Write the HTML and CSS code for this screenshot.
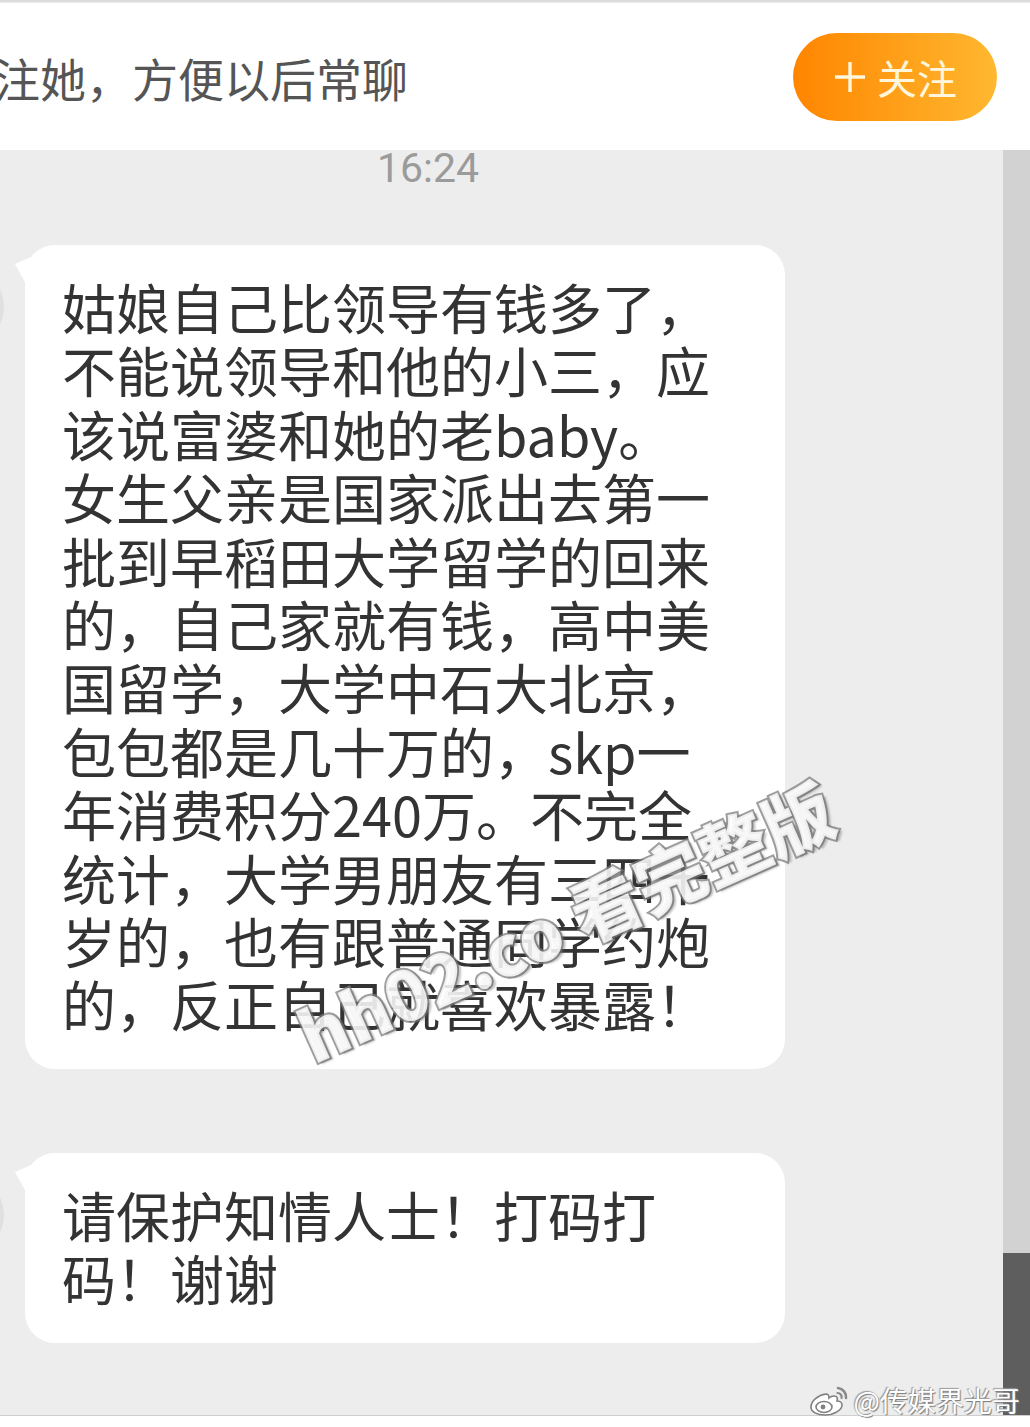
FILE: index.html
```html
<!DOCTYPE html>
<html>
<head>
    <meta charset="utf-8">
    <title>聊天</title>
    <meta name="viewport" content="width=device-width, initial-scale=1.0">
    <link rel="stylesheet" href="styles.css">
</head>
<body>
    <div class="screen">
        <div class="top-edge"></div>
        <div class="header">
            <div class="hint">关注她，方便以后常聊</div>
            <button class="follow-btn">
                <svg class="plus" width="34" height="34" viewBox="0 0 34 34">
                    <path d="M17 2v30M2 17h30" stroke="currentColor" stroke-width="3.4" fill="none"/>
                </svg>
                <span>关注</span>
            </button>
        </div>

        <div class="main">
            <div class="chat">
                <div class="time">16:24</div>

                <div class="msg first">
                    <div class="avatar"></div>
                    <div class="bubble">
                        姑娘自己比领导有钱多了，<br>
                        不能说领导和他的小三，应<br>
                        该说富婆和她的老baby。<br>
                        女生父亲是国家派出去第一<br>
                        批到早稻田大学留学的回来<br>
                        的，自己家就有钱，高中美<br>
                        国留学，大学中石大北京，<br>
                        包包都是几十万的，skp一<br>
                        年消费积分240万。不完全<br>
                        统计，大学男朋友有三四十<br>
                        岁的，也有跟普通同学约炮<br>
                        的，反正自己就喜欢暴露！
                    </div>
                </div>

                <div class="msg second">
                    <div class="avatar"></div>
                    <div class="bubble">
                        请保护知情人士！打码打<br>
                        码！谢谢
                    </div>
                </div>

                <div class="watermark">hh02.co 看完整版</div>
            </div>
            <div class="scrollbar"><div class="thumb"></div></div>
        </div>

        <div class="footer"></div>

        <div class="weibo-mark">
            <svg width="44" height="32" viewBox="0 0 44 32">
                <path d="M18 10c-8 1-15 7-15 13 0 5 6 8 14 8 9 0 17-5 17-10 0-3-3-4-5-4 1-3 0-5-3-5-2 0-4 1-5 2 0-3-1-4-3-4z" fill="#fff" stroke="#808080" stroke-width="1.6"/>
                <ellipse cx="16" cy="23" rx="8" ry="5.5" fill="none" stroke="#808080" stroke-width="1.6"/>
                <circle cx="15" cy="23" r="2.4" fill="#808080"/>
                <path d="M30 4a9 9 0 0 1 8 10" fill="none" stroke="#8a8a8a" stroke-width="2.6" stroke-linecap="round"/>
                <path d="M29.5 9a4 4 0 0 1 4 5" fill="none" stroke="#8a8a8a" stroke-width="2.2" stroke-linecap="round"/>
            </svg>
            <span>@传媒界光哥</span>
        </div>
    </div>
</body>
</html>
```

FILE: styles.css
```css
body {
    margin: 0;
    font-family: "Noto Sans CJK SC", "Noto Sans", sans-serif;
}

.screen {
    width: 1030px;
    height: 1427px;
    position: relative;
    overflow: hidden;
    background-color: #ededed;
}

.top-edge {
    height: 3px;
    background: linear-gradient(#d6d6d6, #ececec);
}

.header {
    height: 147px;
    background-color: #fff;
    display: flex;
    align-items: center;
    justify-content: space-between;
    padding-right: 33px;
    overflow: hidden;
}

.hint {
    margin-left: -52px;
    font-size: 46px;
    color: #555;
    white-space: nowrap;
}

.follow-btn {
    width: 204px;
    height: 88px;
    padding: 0;
    border: none;
    border-radius: 44px;
    background: linear-gradient(90deg, #ff8500, #ffb830);
    color: #fff6dc;
    font-family: inherit;
    font-size: 40px;
    display: flex;
    align-items: center;
    justify-content: center;
    gap: 10px;
}

.main {
    display: flex;
    height: 1265px;
}

.chat {
    flex: 1;
    position: relative;
}

.time {
    padding: 3px 0 0 377px;
    font-family: Roboto, "Noto Sans", sans-serif;
    font-size: 41px;
    line-height: 30px;
    color: #9b9b9b;
}

.msg {
    display: flex;
    align-items: flex-start;
}

.msg.first {
    margin-top: 62px;
}

.msg.second {
    margin-top: 84px;
}

.avatar {
    flex-shrink: 0;
    width: 80px;
    height: 80px;
    margin: 22px 21px 0 -76px;
    border-radius: 50%;
    background-color: #e0e0e0;
}

.bubble {
    width: 760px;
    box-sizing: border-box;
    padding: 30px 30px 33px 37px;
    background-color: #fff;
    border-radius: 30px;
    position: relative;
    font-size: 54px;
    line-height: 63.4px;
    color: #333;
    white-space: nowrap;
}

.bubble::before {
    content: '';
    position: absolute;
    left: -10px;
    top: 12px;
    width: 16px;
    height: 36px;
    background-color: #fff;
    clip-path: polygon(0 7px, 100% 0, 100% 100%);
}

.watermark {
    position: absolute;
    left: 270px;
    top: 728px;
    width: 590px;
    text-align: center;
    font-size: 70px;
    font-weight: 900;
    line-height: 84px;
    white-space: nowrap;
    color: rgba(255, 255, 255, 0.85);
    -webkit-text-stroke: 4px rgba(125, 125, 125, 0.75);
    paint-order: stroke fill;
    text-shadow: 3px 3px 2px rgba(90, 90, 90, 0.35);
    transform: rotate(-24deg);
}

.scrollbar {
    width: 27px;
    background-color: #d2d2d2;
    display: flex;
    flex-direction: column;
    justify-content: flex-end;
}

.thumb {
    height: 162px;
    background-color: #5e5e5e;
}

.footer {
    height: 11px;
    border-top: 1px solid #cfcfcf;
    background-color: #fff;
}

.weibo-mark {
    position: absolute;
    right: 10px;
    bottom: 11px;
    display: flex;
    align-items: flex-end;
    gap: 2px;
    font-size: 28px;
    line-height: 32px;
    color: #fff;
    text-shadow: 1px 1px 1px #777, -1px -1px 1px #999;
}
```
